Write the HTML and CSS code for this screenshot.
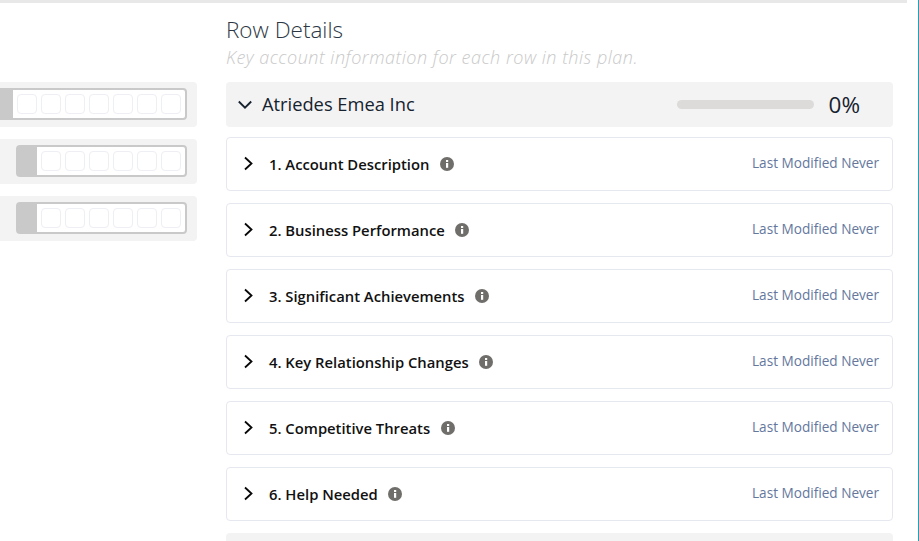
FILE: index.html
```html
<!DOCTYPE html>
<html lang="en">
<head>
<meta charset="utf-8">
<title>Row Details</title>
<link rel="stylesheet" href="styles.css">
</head>
<body>
<div class="frame">
  <div class="topbar"></div>
  <div class="columns">
    <aside class="side">
      <div class="slot"><div class="track"><div class="grip"></div><div class="cells"><i></i><i></i><i></i><i></i><i></i><i></i><i></i></div></div></div>
      <div class="slot"><div class="track"><div class="grip"></div><div class="cells"><i></i><i></i><i></i><i></i><i></i><i></i></div></div></div>
      <div class="slot"><div class="track"><div class="grip"></div><div class="cells"><i></i><i></i><i></i><i></i><i></i><i></i></div></div></div>
    </aside>
    <main class="main">
      <h1 class="title">Row Details</h1>
      <p class="subtitle">Key account information for each row in this plan.</p>
      <div class="account">
        <svg class="chev-down" width="14" height="14" viewBox="0 0 14 14"><path d="M.8 3.500 7 9.700 13.200 3.500" fill="none" stroke="#16222e" stroke-width="1.800"/></svg>
        <span class="account-name">Atriedes Emea Inc</span>
        <span class="progress"></span>
        <span class="percent">0%</span>
      </div>
      <div class="card"><svg class="chev" width="10" height="16" viewBox="0 0 10 16"><path d="M2 1.500 8.500 7.500 2 13.500" fill="none" stroke="#080707" stroke-width="1.800"/></svg><span class="label">1. Account Description</span><svg class="info" width="14" height="14" viewBox="0 0 14 14"><circle cx="7" cy="7" r="7" fill="#706e6b"/><rect x="6" y="6" width="2.200" height="4.800" fill="#fff"/><rect x="6" y="3" width="2.200" height="2" fill="#fff"/></svg><span class="modified">Last Modified Never</span></div>
      <div class="card"><svg class="chev" width="10" height="16" viewBox="0 0 10 16"><path d="M2 1.500 8.500 7.500 2 13.500" fill="none" stroke="#080707" stroke-width="1.800"/></svg><span class="label">2. Business Performance</span><svg class="info" width="14" height="14" viewBox="0 0 14 14"><circle cx="7" cy="7" r="7" fill="#706e6b"/><rect x="6" y="6" width="2.200" height="4.800" fill="#fff"/><rect x="6" y="3" width="2.200" height="2" fill="#fff"/></svg><span class="modified">Last Modified Never</span></div>
      <div class="card"><svg class="chev" width="10" height="16" viewBox="0 0 10 16"><path d="M2 1.500 8.500 7.500 2 13.500" fill="none" stroke="#080707" stroke-width="1.800"/></svg><span class="label">3. Significant Achievements</span><svg class="info" width="14" height="14" viewBox="0 0 14 14"><circle cx="7" cy="7" r="7" fill="#706e6b"/><rect x="6" y="6" width="2.200" height="4.800" fill="#fff"/><rect x="6" y="3" width="2.200" height="2" fill="#fff"/></svg><span class="modified">Last Modified Never</span></div>
      <div class="card"><svg class="chev" width="10" height="16" viewBox="0 0 10 16"><path d="M2 1.500 8.500 7.500 2 13.500" fill="none" stroke="#080707" stroke-width="1.800"/></svg><span class="label">4. Key Relationship Changes</span><svg class="info" width="14" height="14" viewBox="0 0 14 14"><circle cx="7" cy="7" r="7" fill="#706e6b"/><rect x="6" y="6" width="2.200" height="4.800" fill="#fff"/><rect x="6" y="3" width="2.200" height="2" fill="#fff"/></svg><span class="modified">Last Modified Never</span></div>
      <div class="card"><svg class="chev" width="10" height="16" viewBox="0 0 10 16"><path d="M2 1.500 8.500 7.500 2 13.500" fill="none" stroke="#080707" stroke-width="1.800"/></svg><span class="label">5. Competitive Threats</span><svg class="info" width="14" height="14" viewBox="0 0 14 14"><circle cx="7" cy="7" r="7" fill="#706e6b"/><rect x="6" y="6" width="2.200" height="4.800" fill="#fff"/><rect x="6" y="3" width="2.200" height="2" fill="#fff"/></svg><span class="modified">Last Modified Never</span></div>
      <div class="card"><svg class="chev" width="10" height="16" viewBox="0 0 10 16"><path d="M2 1.500 8.500 7.500 2 13.500" fill="none" stroke="#080707" stroke-width="1.800"/></svg><span class="label">6. Help Needed</span><svg class="info" width="14" height="14" viewBox="0 0 14 14"><circle cx="7" cy="7" r="7" fill="#706e6b"/><rect x="6" y="6" width="2.200" height="4.800" fill="#fff"/><rect x="6" y="3" width="2.200" height="2" fill="#fff"/></svg><span class="modified">Last Modified Never</span></div>
      <div class="next"></div>
    </main>
  </div>
</div>
</body>
</html>
```
FILE: styles.css
```css
* { box-sizing: border-box; }
html, body { margin: 0; height: 100%; overflow: hidden; background: #fff; }
body { font-family: "Open Sans", "Lato", sans-serif; color: #16222e; }
.frame { width: 919px; height: 541px; border-right: 1px solid #2a9cb4; overflow: hidden; }
.topbar { width: 907px; height: 3px; background: #e8e8e8; }
.columns { display: flex; gap: 29px; }
.side { width: 197px; flex: none; padding-top: 79px; display: flex; flex-direction: column; gap: 12px; overflow: hidden; }
.slot { height: 45px; background: #f3f3f3; border-radius: 0 4px 4px 0; display: flex; justify-content: flex-end; align-items: center; padding-right: 10px; }
.track { flex: none; height: 32px; margin-top: -1px; display: flex; border: 2px solid #c9c9c9; border-radius: 4px; background: #fff; }
.grip { width: 19px; background: #c9c9c9; flex: none; }
.cells { display: flex; gap: 3.500px; padding: 4px 4px 0 3.500px; }
.cells i { display: block; width: 20.500px; height: 20px; border: 1px solid #eeeef5; border-radius: 4px; }
.main { width: 667px; flex: none; }
.title { margin: 14px 0 0; font-size: 22.500px; line-height: 26px; font-weight: 300; color: #2b3744; }
.subtitle { margin: 2px 0 0; font-size: 18px; line-height: 24px; font-style: italic; font-weight: 300; letter-spacing: 0.500px; color: #c9c9c9; }
.account { height: 45px; margin-top: 13px; background: #f3f3f3; border-radius: 4px; display: flex; align-items: center; padding: 0 33px 0 12px; }
.chev-down { flex: none; }
.account-name { margin-left: 10px; margin-top: -3px; font-size: 18.300px; flex: 1; }
.progress { width: 137px; height: 9px; border-radius: 5px; background: #dddbda; }
.percent { margin-left: 13px; margin-top: -1px; font-size: 22.500px; font-weight: 400; width: 33px; text-align: right; white-space: nowrap; }
.card { height: 54px; margin-top: 10px; border: 1px solid #e5e8ef; border-radius: 4px; display: flex; align-items: center; padding: 0 13px 0 16px; }
.card + .card { margin-top: 12px; }
.chev { flex: none; }
.label { margin-left: 16px; font-size: 14.800px; font-weight: 600; color: #111; }
.info { margin-left: 10.500px; flex: none; }
.modified { margin-left: auto; margin-top: -3px; font-size: 13.600px; color: #64779d; }
.next { height: 20px; margin-top: 12px; background: #f3f3f3; border-radius: 4px; }
```
